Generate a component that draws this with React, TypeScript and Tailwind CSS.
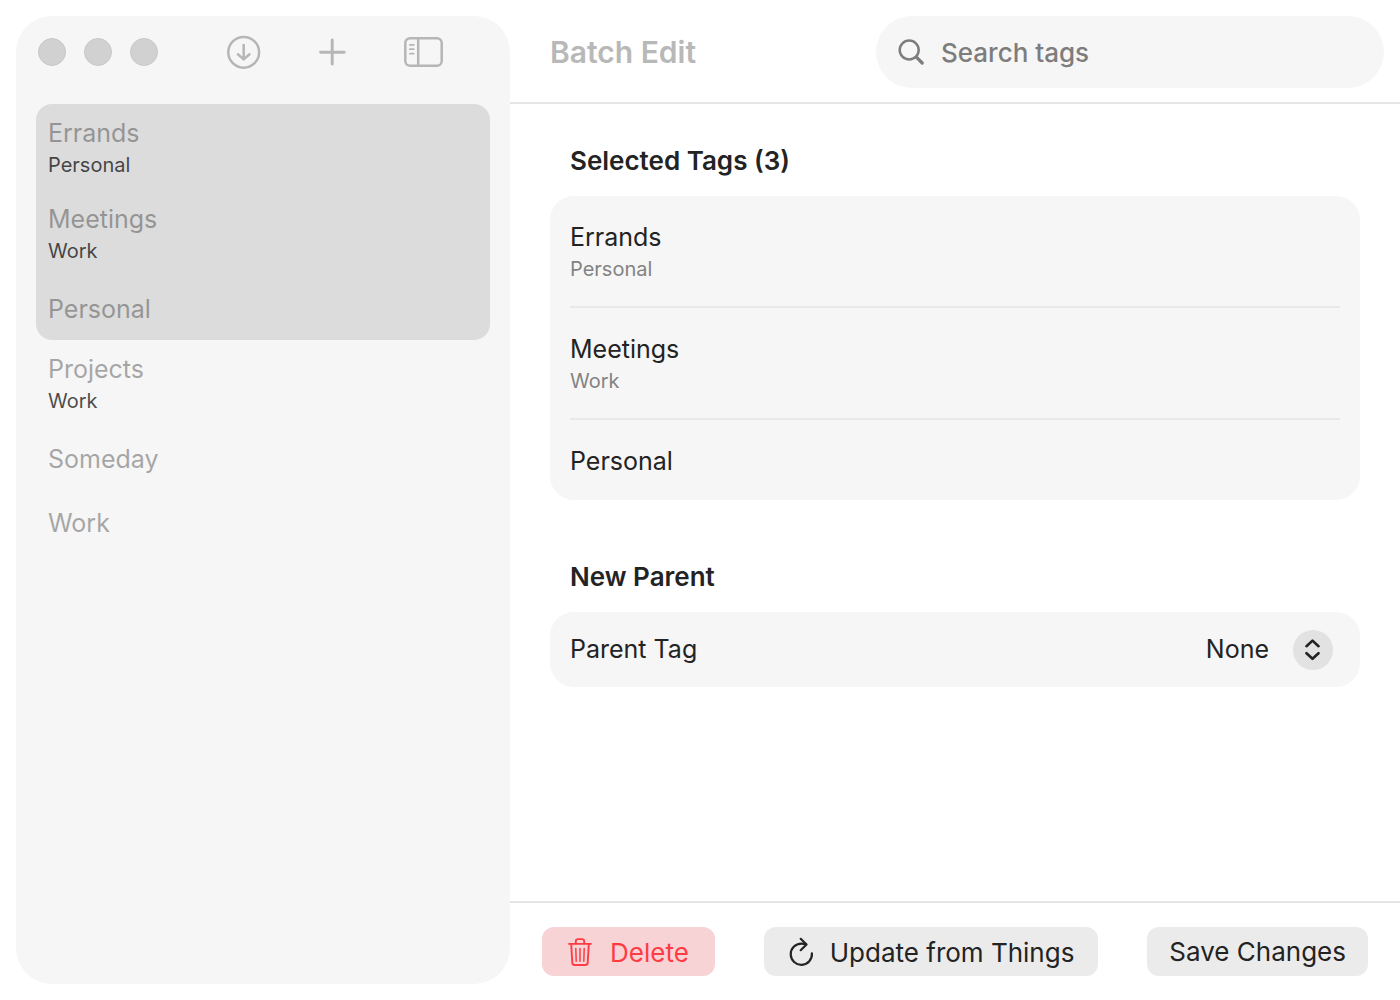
const tags = [
  { name: "Errands", parent: "Personal", selected: true },
  { name: "Meetings", parent: "Work", selected: true },
  { name: "Personal", selected: true },
  { name: "Projects", parent: "Work", selected: false },
  { name: "Someday", selected: false },
  { name: "Work", selected: false },
];

const selectedTags = tags.filter((tag) => tag.selected);
const otherTags = tags.filter((tag) => !tag.selected);

const DownloadIcon = () => (
  <svg width="34" height="34" viewBox="0 0 34 34" fill="none" stroke="currentColor" strokeWidth="2.5" strokeLinecap="round" strokeLinejoin="round">
    <circle cx="16.7" cy="17.3" r="15.4" />
    <path d="M16.7 10v14.4M10.9 19.3l5.8 5.1 5.8-5.1" />
  </svg>
);

const PlusIcon = () => (
  <svg width="28" height="28" viewBox="0 0 28 28" fill="none" stroke="currentColor" strokeWidth="2.9" strokeLinecap="round">
    <path d="M13.2 2v24M1.6 14.2h23.6" />
  </svg>
);

const SidebarIcon = () => (
  <svg width="40" height="30" viewBox="0 0 40 30" fill="none" stroke="currentColor" strokeWidth="2.5" strokeLinecap="round">
    <rect x="1.3" y="1.3" width="36.4" height="27.4" rx="4.8" />
    <path d="M14.2 1.5v27" />
    <path strokeWidth="1.7" d="M5.8 7.8h4M5.8 12.2h4M5.8 16.6h4" />
  </svg>
);

const SearchIcon = () => (
  <svg width="28" height="28" viewBox="0 0 28 28" fill="none" stroke="currentColor" strokeLinecap="round">
    <circle cx="12.2" cy="12" r="9.5" strokeWidth="2.5" />
    <path strokeWidth="3.2" d="M19.4 19.2l5.8 5.8" />
  </svg>
);

const TrashIcon = () => (
  <svg width="24" height="30" viewBox="0 0 24 30" fill="none" stroke="currentColor" strokeWidth="1.9" strokeLinecap="round" strokeLinejoin="round">
    <path d="M1 6.9h22" />
    <path d="M7.8 6.5V4.3A2.2 2.2 0 0 1 10 2.1h4a2.2 2.2 0 0 1 2.2 2.2v2.2" />
    <path d="M3.2 7.1l1.1 18.5a2.5 2.5 0 0 0 2.5 2.4h10.4a2.5 2.5 0 0 0 2.5-2.4l1.1-18.5" />
    <path strokeWidth="1.5" d="M7.8 11.6l.4 12.6M12 11.6v12.6M16.2 11.6l-.4 12.6" />
  </svg>
);

const RefreshIcon = () => (
  <svg width="26" height="30" viewBox="0 0 26 30" fill="none" stroke="currentColor" strokeWidth="2.2" strokeLinecap="round" strokeLinejoin="round">
    <path d="M23.9 16.4A10.6 10.6 0 1 1 13.3 6.6c1.7 0 3.2.2 4.8.8" />
    <path d="M12.7 1.8l5.8 5.7-5.8 5.7" />
  </svg>
);

const ChevronsIcon = () => (
  <svg width="16" height="22" viewBox="0 0 16 22" fill="none" stroke="currentColor" strokeWidth="2.6" strokeLinecap="round" strokeLinejoin="round">
    <path d="M1.5 7.2l6-5.6 6 5.6M1.5 14.2l6 5.6 6-5.6" />
  </svg>
);

type Tag = { name: string; parent?: string };

const SidebarTag = ({ tag }: { tag: Tag }) => (
  <li>
    {tag.parent ? (
      <button className="block w-full px-3 pt-[13px] pb-[9px] text-left">
        <span className="block leading-8 opacity-35">{tag.name}</span>
        <span className="block text-[20px] leading-8 opacity-75">{tag.parent}</span>
      </button>
    ) : (
      <button className="block w-full px-3 pt-[17px] pb-[15px] text-left leading-8">
        <span className="block opacity-35">{tag.name}</span>
      </button>
    )}
  </li>
);

const Sidebar = () => (
  <aside className="my-4 ml-4 w-[494px] shrink-0 rounded-[36px] bg-[#f6f6f6]">
    <div className="flex h-[72px] items-center pl-[22px]">
      <div className="flex gap-[18px]">
        <button aria-label="Close" className="size-7 rounded-full border border-[#c8c8c8] bg-[#d1d1d1]" />
        <button aria-label="Minimize" className="size-7 rounded-full border border-[#c8c8c8] bg-[#d1d1d1]" />
        <button aria-label="Zoom" className="size-7 rounded-full border border-[#c8c8c8] bg-[#d1d1d1]" />
      </div>
      <div className="flex flex-1 items-center justify-between pr-[66px] pl-[69px] text-[#b6b6b6]">
        <button aria-label="Import"><DownloadIcon /></button>
        <button aria-label="Add tag"><PlusIcon /></button>
        <button aria-label="Toggle sidebar"><SidebarIcon /></button>
      </div>
    </div>

    <nav className="px-5 pt-4 text-[#111111]">
      <ul className="rounded-2xl bg-[#dcdcdc]">
        {selectedTags.map((tag) => <SidebarTag key={tag.name} tag={tag} />)}
      </ul>
      <ul>
        {otherTags.map((tag) => <SidebarTag key={tag.name} tag={tag} />)}
      </ul>
    </nav>
  </aside>
);

export default function App() {
  return (
    <div className="flex min-h-screen bg-white font-['Inter','Liberation_Sans',sans-serif] text-[25px] text-[#232323]">
      <Sidebar />

      <div className="flex min-w-0 flex-1 flex-col">
        <header className="flex items-center justify-between border-b-2 border-[#e5e5e5] pt-4 pr-4 pb-[14px] pl-10">
          <h1 className="text-[30px] font-semibold text-[#b8b8b8]">Batch Edit</h1>
          <label className="flex h-[72px] w-[508px] items-center gap-4 rounded-full bg-[#f6f6f6] px-[21px] text-[#7d7d7d]">
            <SearchIcon />
            <input
              type="search"
              aria-label="Search tags"
              placeholder="Search tags"
              className="min-w-0 flex-1 bg-transparent text-[26px] font-medium outline-none placeholder:text-[#7d7d7d]"
            />
          </label>
        </header>

        <main className="flex-1 px-10 pt-10">
          <section>
            <h2 className="mb-[18px] px-5 text-[26px] leading-[34px] font-semibold">Selected Tags (3)</h2>
            <ul className="rounded-3xl bg-[#f6f6f6] px-5">
              {selectedTags.map((tag) => (
                <li key={tag.name} className="border-b-2 border-[#e8e8e8] last:border-b-0">
                  {tag.parent ? (
                    <div className="pt-[25px] pb-[21px]">
                      <p className="leading-8">{tag.name}</p>
                      <p className="text-[20px] leading-8 text-[#838383]">{tag.parent}</p>
                    </div>
                  ) : (
                    <p className="pt-[25px] pb-[23px] leading-8">{tag.name}</p>
                  )}
                </li>
              ))}
            </ul>
          </section>

          <section className="mt-[60px]">
            <h2 className="mb-[18px] px-5 text-[26px] leading-[34px] font-semibold">New Parent</h2>
            <div className="flex h-[75px] items-center rounded-3xl bg-[#f6f6f6] pr-[27px] pl-5">
              <label htmlFor="parent-tag" className="flex-1">Parent Tag</label>
              <select id="parent-tag" className="field-sizing-content appearance-none bg-transparent outline-none">
                <option>None</option>
              </select>
              <span className="ml-6 flex size-10 items-center justify-center rounded-full bg-[#e2e2e2]">
                <ChevronsIcon />
              </span>
            </div>
          </section>
        </main>

        <footer className="flex justify-between border-t-2 border-[#e5e5e5] px-8 py-6 text-[26px]">
          <button className="flex h-[49px] items-center gap-[18px] rounded-xl bg-[#f8d3d5] px-[26px] text-[#ff3b43]">
            <TrashIcon />
            <span className="pt-0.5">Delete</span>
          </button>
          <button className="flex h-[49px] items-center gap-4 rounded-xl bg-[#ebebeb] px-6">
            <RefreshIcon />
            <span className="pt-0.5">Update from Things</span>
          </button>
          <button className="h-[49px] rounded-xl bg-[#ebebeb] px-[22px]">Save Changes</button>
        </footer>
      </div>
    </div>
  );
}
